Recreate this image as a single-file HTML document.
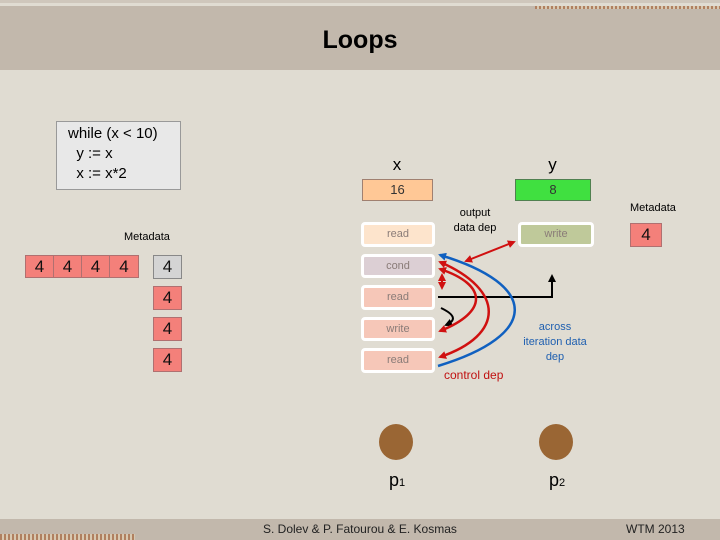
<!DOCTYPE html>
<html><head><style>
body{margin:0;width:720px;height:540px;position:relative;background:#e0dcd2;font-family:"Liberation Sans",sans-serif;overflow:hidden}
.a{position:absolute}
.c{position:absolute;background:#f4807a;border:1px solid #b07070;text-align:center;font-size:17px;line-height:22px;box-sizing:border-box;color:#111}
.b{position:absolute;border:3px solid #fff;border-radius:4px;box-sizing:border-box;text-align:center;font-size:11px;color:#8a7c78;line-height:18px}
</style></head><body>
<div class="a" style="left:0;top:0;width:720px;height:3px;background:#cfc7bc"></div>
<div class="a" style="left:0;top:6px;width:720px;height:64px;background:#c2b8ac"></div>
<div class="a" style="left:535px;top:6px;width:185px;height:3px;background:repeating-linear-gradient(90deg,#b08060 0 2px,#d8c8b0 2px 4px)"></div>
<div class="a" style="left:0;top:26px;width:720px;text-align:center;font-size:25px;font-weight:bold">Loops</div>
<div class="a" style="left:56px;top:121px;width:125px;height:69px;background:#e8e8e8;border:1px solid #999;box-sizing:border-box;font-size:15px;line-height:20px;padding:2px 0 0 11px">while (x &lt; 10)<br>&nbsp;&nbsp;y := x<br>&nbsp;&nbsp;x := x*2</div>
<div class="a" style="left:124px;top:231px;font-size:11px">Metadata</div>
<div class="c" style="left:25px;top:255px;width:29px;height:23px">4</div>
<div class="c" style="left:53px;top:255px;width:29px;height:23px">4</div>
<div class="c" style="left:81px;top:255px;width:29px;height:23px">4</div>
<div class="c" style="left:109px;top:255px;width:30px;height:23px">4</div>
<div class="c" style="left:153px;top:255px;width:29px;height:24px;background:#d4d4d4;border-color:#888">4</div>
<div class="c" style="left:153px;top:286px;width:29px;height:24px">4</div>
<div class="c" style="left:153px;top:317px;width:29px;height:24px">4</div>
<div class="c" style="left:153px;top:348px;width:29px;height:24px">4</div>
<div class="a" style="left:362px;top:155px;width:70px;text-align:center;font-size:17px">x</div>
<div class="a" style="left:515px;top:155px;width:75px;text-align:center;font-size:17px">y</div>
<div class="a" style="left:362px;top:179px;width:71px;height:22px;background:#ffc896;border:1px solid #a08070;box-sizing:border-box;text-align:center;font-size:13px;line-height:20px;color:#333">16</div>
<div class="a" style="left:515px;top:179px;width:76px;height:22px;background:#40e040;border:1px solid #508050;box-sizing:border-box;text-align:center;font-size:13px;line-height:20px;color:#333">8</div>
<div class="a" style="left:440px;top:206px;width:70px;text-align:center;font-size:11px;line-height:15px">output<br>data dep</div>
<div class="a" style="left:630px;top:202px;font-size:11px">Metadata</div>
<div class="c" style="left:630px;top:223px;width:32px;height:24px">4</div>
<div class="b" style="left:361px;top:222px;width:74px;height:25px;background:#fde4cc">read</div>
<div class="b" style="left:361px;top:254px;width:74px;height:24px;background:#dccfd4">cond</div>
<div class="b" style="left:361px;top:285px;width:74px;height:25px;background:#f6c7b8">read</div>
<div class="b" style="left:361px;top:317px;width:74px;height:24px;background:#f6c7b8">write</div>
<div class="b" style="left:361px;top:348px;width:74px;height:25px;background:#f6c7b8">read</div>
<div class="b" style="left:518px;top:222px;width:76px;height:25px;background:#bfc99a">write</div>
<svg class="a" style="left:0;top:0" width="720" height="540">
<defs>
<marker id="r" markerUnits="userSpaceOnUse" markerWidth="8" markerHeight="8" refX="6" refY="4" orient="auto-start-reverse"><path d="M0,0L8,4L0,8z" fill="#d01010"/></marker>
<marker id="k" markerUnits="userSpaceOnUse" markerWidth="8" markerHeight="8" refX="6" refY="4" orient="auto"><path d="M0,0L8,4L0,8z" fill="#000"/></marker>
<marker id="bl" markerUnits="userSpaceOnUse" markerWidth="8" markerHeight="8" refX="6" refY="4" orient="auto"><path d="M0,0L8,4L0,8z" fill="#1060c0"/></marker>
</defs>
<path d="M466,261L514,242" stroke="#d01010" stroke-width="2" fill="none" marker-start="url(#r)" marker-end="url(#r)"/>
<path d="M438,297H552V276" stroke="#000" stroke-width="2" fill="none" marker-end="url(#k)"/>
<path d="M441,308Q462,318 446,325" stroke="#000" stroke-width="2" fill="none" marker-end="url(#k)"/>
<path d="M438,366C540,335 540,285 440,255" stroke="#1060c0" stroke-width="2.5" fill="none" marker-end="url(#bl)"/>
<path d="M440,357C505,335 505,290 440,262" stroke="#d01010" stroke-width="2.5" fill="none" marker-start="url(#r)" marker-end="url(#r)"/>
<path d="M440,331C488,312 488,285 440,269" stroke="#d01010" stroke-width="2.5" fill="none" marker-start="url(#r)" marker-end="url(#r)"/>
<path d="M442,288L442,275" stroke="#d01010" stroke-width="2" fill="none" marker-start="url(#r)" marker-end="url(#r)"/>
<ellipse cx="396" cy="442" rx="17" ry="18" fill="#9a6634"/>
<ellipse cx="556" cy="442" rx="17" ry="18" fill="#9a6634"/>
</svg>
<div class="a" style="left:515px;top:320px;width:80px;text-align:center;font-size:11px;line-height:15px;color:#2060b0">across<br>iteration data<br>dep</div>
<div class="a" style="left:444px;top:368px;font-size:12px;color:#c01010">control dep</div>
<div class="a" style="left:389px;top:470px;font-size:18px">p<span style="font-size:11px">1</span></div>
<div class="a" style="left:549px;top:470px;font-size:18px">p<span style="font-size:11px">2</span></div>
<div class="a" style="left:0;top:519px;width:720px;height:21px;background:#c2b8ac"></div>
<div class="a" style="left:0;top:534px;width:135px;height:6px;background:repeating-linear-gradient(90deg,#b08060 0 2px,#d8c8b0 2px 4px)"></div>
<div class="a" style="left:263px;top:522px;font-size:12px;color:#222">S. Dolev &amp; P. Fatourou &amp; E. Kosmas</div>
<div class="a" style="left:626px;top:522px;font-size:12px;color:#222">WTM 2013</div>
</body></html>
